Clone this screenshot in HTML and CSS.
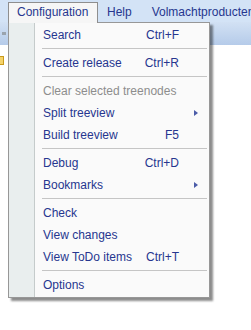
FILE: index.html
```html
<!DOCTYPE html>
<html lang="en">
<head>
  <meta charset="UTF-8">
  <title>Configuration menu</title>
  <link rel="stylesheet" href="styles.css">
</head>
<body>
  <div class="window">
    <div class="menubar">
      <div class="top-item open">Configuration</div>
      <div class="top-item">Help</div>
      <div class="top-item">Volmachtproducten</div>
    </div>
    <div class="toolbar"><span class="grip"></span></div>
    <div class="content"><span class="node-icon"></span></div>

    <div class="dropdown">
      <div class="row"><span class="label">Search</span><span class="key">Ctrl+F</span></div>
      <div class="sep"></div>
      <div class="row"><span class="label">Create release</span><span class="key">Ctrl+R</span></div>
      <div class="sep"></div>
      <div class="row disabled"><span class="label">Clear selected treenodes</span></div>
      <div class="row"><span class="label">Split treeview</span><span class="arrow"></span></div>
      <div class="row"><span class="label">Build treeview</span><span class="key">F5</span></div>
      <div class="sep"></div>
      <div class="row"><span class="label">Debug</span><span class="key">Ctrl+D</span></div>
      <div class="row"><span class="label">Bookmarks</span><span class="arrow"></span></div>
      <div class="sep"></div>
      <div class="row"><span class="label">Check</span></div>
      <div class="row"><span class="label">View changes</span></div>
      <div class="row"><span class="label">View ToDo items</span><span class="key">Ctrl+T</span></div>
      <div class="sep"></div>
      <div class="row"><span class="label">Options</span></div>
    </div>
  </div>
</body>
</html>
```

FILE: styles.css
```css
body {
  margin: 0;
  padding: 0;
  background-color: white;
  font-family: "Liberation Sans", Arial, sans-serif;
  font-size: 12px;
  color: #26368f;
}

.window {
  position: relative;
  width: 251px;
  height: 330px;
  overflow: hidden;
}

.menubar {
  height: 22px;
  background-color: #d3e3f6;
  display: flex;
  align-items: flex-end;
  padding-left: 8px;
  white-space: nowrap;
}

.top-item {
  height: 20px;
  line-height: 19px;
  padding: 0 10px 0 8px;
  box-sizing: border-box;
  border: 1px solid transparent;
  border-bottom: none;
}

.top-item.open {
  position: relative;
  z-index: 2;
  width: 90px;
  height: 21px;
  background-color: #f6f6f6;
  border-color: #8e8e8e;
  margin-bottom: -1px;
}

.toolbar {
  height: 23px;
  background: linear-gradient(#d2e1f4, #b5cbe9);
  position: relative;
}

.grip {
  position: absolute;
  left: 2px;
  top: 10px;
  width: 4px;
  height: 3px;
  background-color: #9aa3ad;
}

.content {
  height: 285px;
  position: relative;
}

.node-icon {
  position: absolute;
  left: 0;
  top: 11px;
  width: 3px;
  height: 7px;
  background-color: #f5d36a;
  border: 1px solid #c99a1c;
  border-left: none;
}

.dropdown {
  position: absolute;
  z-index: 1;
  left: 8px;
  top: 22px;
  width: 200px;
  padding: 1px 0;
  border: 1px solid #979797;
  background: linear-gradient(to right, #e9eeee 25px, #c5cbcb 25px, #c5cbcb 26px, #fafafa 26px);
  box-shadow: 3px 3px 2px rgba(0, 0, 0, 0.45);
}

.row {
  height: 22px;
  display: flex;
  align-items: center;
  padding-left: 34px;
  position: relative;
}

.label {
  flex: 1;
  white-space: nowrap;
}

.key {
  width: 60px;
  text-align: right;
  margin-right: 30px;
}

.disabled {
  color: #8d8d8d;
}

.arrow {
  position: absolute;
  left: 185px;
  top: 8px;
  width: 0;
  height: 0;
  border-top: 3px solid transparent;
  border-bottom: 3px solid transparent;
  border-left: 4px solid #4b5ca8;
}

.sep {
  height: 6px;
  margin-left: 33px;
  margin-right: 2px;
  background: linear-gradient(#fafafa 2px, #c5c5c5 2px, #c5c5c5 3px, #fafafa 3px);
}
```
